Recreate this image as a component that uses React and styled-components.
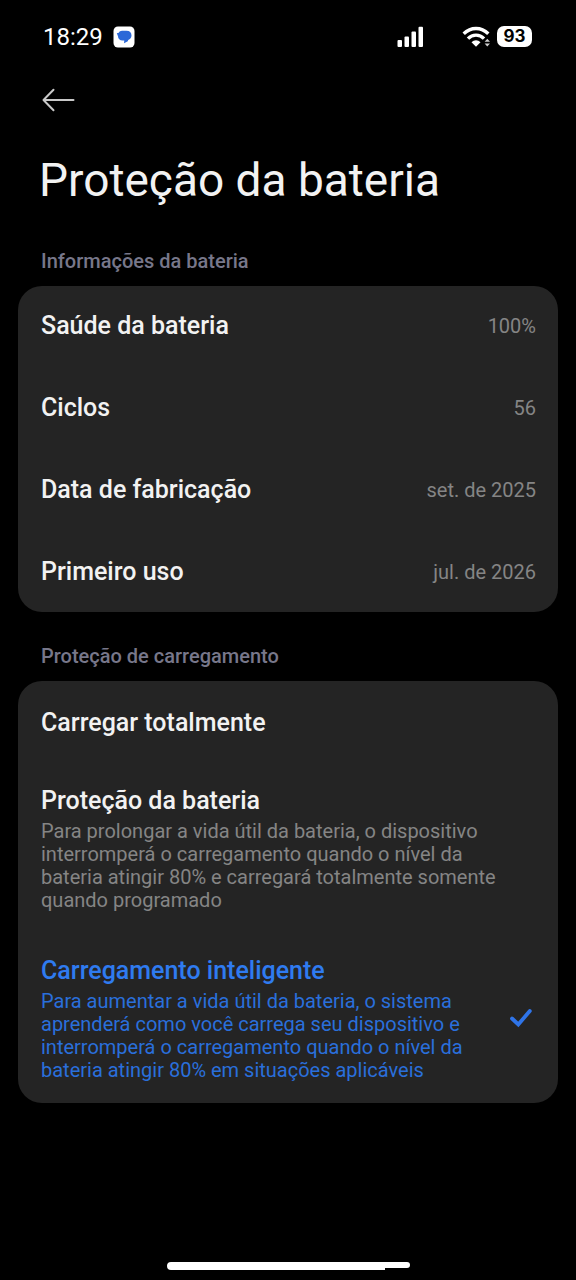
import React, { useState } from "react";
import styled, { createGlobalStyle } from "styled-components";

const GlobalStyle = createGlobalStyle`
  *, *::before, *::after { box-sizing: border-box; }
  body {
    margin: 0;
    background: #000;
    color: #f2f2f2;
    font-family: Roboto, "Liberation Sans", sans-serif;
  }
`;

const Screen = styled.div`
  min-height: 100vh;
  display: flex;
  flex-direction: column;
`;

const StatusBar = styled.header`
  display: flex;
  align-items: center;
  height: 73px;
  padding: 0 44px 0 43px;
`;

const Clock = styled.time`
  font-size: 24px;
  line-height: 28px;
  margin-right: 10px;
  color: #fff;
`;

const StatusIcons = styled.div`
  display: flex;
  align-items: center;
  margin-left: auto;
`;

const Signal = styled.svg`
  margin-right: 38px;
`;

const Battery = styled.span`
  width: 35px;
  height: 21px;
  margin-left: 6px;
  border-radius: 7px;
  background: #fff;
  color: #000;
  font-family: Inter, Roboto, sans-serif;
  font-size: 17px;
  font-weight: 700;
  line-height: 21px;
  text-align: center;
`;

const BackButton = styled.button`
  display: flex;
  align-self: flex-start;
  align-items: center;
  height: 54px;
  margin: 0 42px;
  padding: 0;
  border: 0;
  background: none;
  color: #c8c8c8;
  cursor: pointer;
`;

const Title = styled.h1`
  margin: 25px 39px 0;
  font-size: 46px;
  font-weight: 400;
  line-height: 56px;
`;

const SectionTitle = styled.h2`
  margin: 0;
  padding: ${(p) => (p.$first ? "41px" : "32px")} 41px 13px;
  font-size: 20px;
  font-weight: 500;
  line-height: 24px;
  color: #77778a;
`;

const InfoCard = styled.dl`
  display: flex;
  flex-direction: column;
  gap: 2px;
  margin: 0 18px;
  border-radius: 24px;
  background: #242424;
`;

const InfoRow = styled.div`
  display: flex;
  align-items: center;
  justify-content: space-between;
  height: 80px;
  padding: 0 22px 0 23px;
`;

const InfoLabel = styled.dt`
  font-size: 25px;
  font-weight: 500;
  line-height: 28px;
`;

const InfoValue = styled.dd`
  margin: 0;
  font-size: 20px;
  line-height: 24px;
  color: #858585;
`;

const OptionCard = styled.div`
  margin: 0 18px;
  border-radius: 24px;
  background: #242424;
`;

const Option = styled.label`
  display: flex;
  align-items: center;
  justify-content: space-between;
  padding: ${(p) => (p.$plain ? "28px" : "24px")} 24px ${(p) => (p.$plain ? "26px" : "21px")} 23px;
  color: ${(p) => (p.$selected ? "#2f7bf0" : "#f2f2f2")};
  cursor: pointer;
`;

const OptionText = styled.span`
  display: flex;
  flex-direction: column;
  gap: 5px;
  max-width: 456px;
`;

const OptionTitle = styled.span`
  font-size: 25px;
  font-weight: 500;
  line-height: 28px;
`;

const OptionDescription = styled.span`
  font-size: 20px;
  line-height: 23px;
  color: ${(p) => (p.$selected ? "#2a6fdb" : "#858585")};
`;

const Radio = styled.input`
  appearance: none;
  width: 0;
  height: 0;
  margin: 0;
`;

const Check = styled.svg`
  flex: none;
`;

const HomeBar = styled.footer`
  display: flex;
  justify-content: center;
  margin-top: auto;
  padding: 20px 0 10px;
`;

const info = [
  ["Saúde da bateria", "100%"],
  ["Ciclos", "56"],
  ["Data de fabricação", "set. de 2025"],
  ["Primeiro uso", "jul. de 2026"],
];

const options = [
  { id: "full", title: "Carregar totalmente" },
  {
    id: "protect",
    title: "Proteção da bateria",
    text: "Para prolongar a vida útil da bateria, o dispositivo interromperá o carregamento quando o nível da bateria atingir 80% e carregará totalmente somente quando programado",
  },
  {
    id: "smart",
    title: "Carregamento inteligente",
    text: "Para aumentar a vida útil da bateria, o sistema aprenderá como você carrega seu dispositivo e interromperá o carregamento quando o nível da bateria atingir 80% em situações aplicáveis",
  },
];

export default function App() {
  const [mode, setMode] = useState("smart");

  return (
    <Screen>
      <GlobalStyle />
      <StatusBar>
        <Clock>18:29</Clock>
        <svg width="22" height="22" viewBox="0 0 22 22" aria-hidden="true">
          <rect x="0.5" y="0.5" width="21" height="21" rx="4.5" fill="#fff" />
          <path
            d="M9 4.800h4.500c3.200 0 5 2 5 4.700 0 2.200-1.300 3.900-3.300 4.500l-.4 1.200-3.800 2 .3-2.700H9.500C6.800 14.500 5 12.700 5 10.200L3.800 7.300l2-.6C6.500 5.500 7.500 4.800 9 4.800z"
            fill="#2b68d8"
          />
        </svg>
        <StatusIcons>
          <Signal width="27" height="22" viewBox="0 0 27 22" fill="#fff" aria-hidden="true">
            <rect x="0.5" y="14" width="4.500" height="7" rx="1" />
            <rect x="7.500" y="10.500" width="4.500" height="10.500" rx="1" />
            <rect x="14.500" y="5.500" width="4.500" height="15.500" rx="1" />
            <rect x="21.500" y="0.800" width="4.500" height="20.200" rx="1" />
          </Signal>
          <svg width="29" height="22" viewBox="0 0 29 22" aria-hidden="true">
            <g fill="none" stroke="#fff" strokeWidth="3.400">
              <path d="M1.700 7.700C8.800 0.700 19.200 0.700 26.300 7.700" />
              <path d="M6 12.600C10.500 8 17.500 8 22 12.600" />
            </g>
            <path d="M9.500 16.200C12 13.500 16 13.500 18.500 16.200L14 20.800z" fill="#fff" />
            <path d="M22.600 15.800l2.700-3 2.700 3zM22.600 17.600h5.400l-2.700 3z" fill="#d0d0d0" />
          </svg>
          <Battery>93</Battery>
        </StatusIcons>
      </StatusBar>

      <BackButton type="button" aria-label="Voltar">
        <svg width="33" height="24" viewBox="0 0 33 24" fill="none" stroke="currentColor" strokeWidth="2" strokeLinecap="round" strokeLinejoin="round">
          <path d="M31.500 12H1.500M11.500 1.700L1.500 12 11.500 22.300" />
        </svg>
      </BackButton>

      <main>
        <Title>Proteção da bateria</Title>

        <SectionTitle $first>Informações da bateria</SectionTitle>
        <InfoCard>
          {info.map(([label, value]) => (
            <InfoRow key={label}>
              <InfoLabel>{label}</InfoLabel>
              <InfoValue>{value}</InfoValue>
            </InfoRow>
          ))}
        </InfoCard>

        <SectionTitle id="charging">Proteção de carregamento</SectionTitle>
        <OptionCard role="radiogroup" aria-labelledby="charging">
          {options.map(({ id, title, text }) => {
            const selected = mode === id;
            return (
              <Option key={id} $plain={!text} $selected={selected}>
                <OptionText>
                  <OptionTitle>{title}</OptionTitle>
                  {text && <OptionDescription $selected={selected}>{text}</OptionDescription>}
                </OptionText>
                <Radio type="radio" name="mode" value={id} checked={selected} onChange={() => setMode(id)} />
                {selected && (
                  <Check width="26" height="22" viewBox="0 0 26 22" fill="none" stroke="#2f74e8" strokeWidth="3.800" aria-hidden="true">
                    <path d="M4 9.500L10.300 15.500 21.800 2" strokeLinecap="round" />
                  </Check>
                )}
              </Option>
            );
          })}
        </OptionCard>
      </main>

      <HomeBar>
        <svg width="244" height="8" viewBox="0 0 244 8" fill="#fff" aria-hidden="true">
          <path d="M5 0H241A3 3 0 0 1 241 6H219V8H5A4 4 0 0 1 5 0z" />
        </svg>
      </HomeBar>
    </Screen>
  );
}
